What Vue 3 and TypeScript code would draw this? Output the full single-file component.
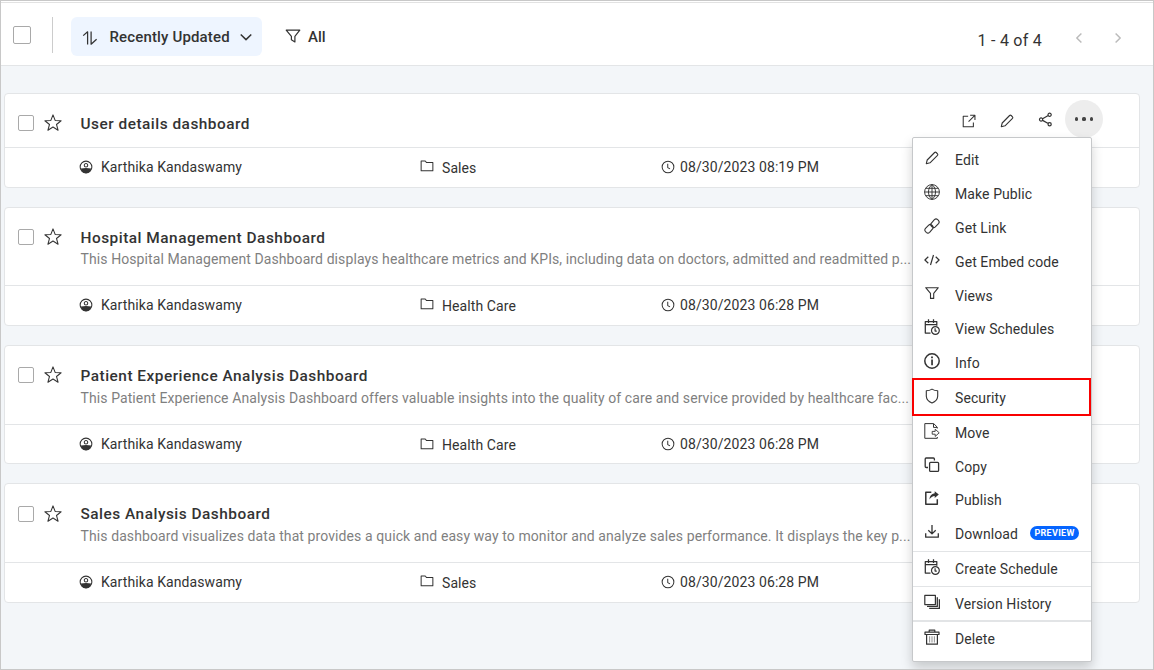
<script setup lang="ts">
interface Shape { d: string; fill?: boolean; w?: number; light?: boolean }
interface MenuItem { label: string; icon: string; h: number; marked?: boolean; badge?: string; rule?: number }
interface Card { title: string; text?: string; folder: string; date: string; size: string; menu?: boolean }

const icons: Record<string, Shape[]> = {
  edit: [{ d: 'M2.3 13.7 3.2 10 10.6 2.5Q11.4 1.8 12.2 2.5L13.5 3.8Q14.2 4.6 13.5 5.4L6 12.8Z' }],
  globe: [
    { d: 'M8 .6A7.4 7.4 0 1 0 8 15.4 7.4 7.4 0 1 0 8 .6M.6 8H15.4M8 .6V15.4M8 .6C3.3 4.5 3.3 11.5 8 15.4M8 .6C12.7 4.5 12.7 11.5 8 15.4M2 4.3H14M2 11.7H14', w: 0.95 },
  ],
  link: [
    { d: 'M7 5.6 10.4 1.7Q12 .2 13.7 1.7L14.4 2.4Q15.9 4 14.5 5.6L11.3 8.9Q9.7 10.3 8.1 8.9L7.4 8.2Q6.4 7 7 5.6M9 10.4 5.6 14.3Q4 15.8 2.3 14.3L1.6 13.6Q.1 12 1.5 10.4L4.7 7.1Q6.3 5.7 7.9 7.1L8.6 7.8Q9.6 9 9 10.4' },
  ],
  code: [{ d: 'M4.3 4.7.9 8 4.3 11.3M11.7 4.7 15.1 8 11.7 11.3M9.5 3 6.5 13', w: 1.2 }],
  funnel: [{ d: 'M1.2 2.2H14.8L9.9 8.4V14L6.4 11.8V8.4Z', w: 1.2 }],
  views: [{ d: 'M1.7 1.7H14.3L9.7 7.4V12.4H6.5V7.4Z' }],
  schedule: [
    { d: 'M6.5 14H1.3V2.5H12.8V6.8M1.3 5.5H12.8M4.5.3V4M9.5.3V4', w: 1.25 },
    { d: 'M11.4 7.6A3.9 3.9 0 1 0 11.4 15.4 3.9 3.9 0 1 0 11.4 7.6M11.1 9.2V12.1H12.8', w: 1.2 },
  ],
  info: [
    { d: 'M8 .8A7.2 7.2 0 1 0 8 15.2 7.2 7.2 0 1 0 8 .8', w: 1.5 },
    { d: 'M7.2 6.6H8.9V12.3H7.2ZM7.1 3.6H8.9V5.2H7.1Z', fill: true },
  ],
  shield: [{ d: 'M8 1.1C6 2.3 4.3 2.7 2.3 2.8V8.2C2.5 11.2 5 13.7 8 15 11 13.7 13.5 11.2 13.7 8.2V2.8C11.7 2.7 10 2.3 8 1.1Z' }],
  move: [
    { d: 'M13.3 5.5V4.2L9.7.6H.8V15.3H13.3V14M9.5.8V4.4H13', w: 1 },
    { d: 'M8.2 8.4H11.2V6.2L15.2 9.8 11.2 13.4V11.2H8.2Z', w: 0.9 },
  ],
  copy: [
    { d: 'M4 10.5H2.2Q1.2 10.5 1.2 9.5V2Q1.2 1 2.2 1H9.4Q10.4 1 10.4 2V3.6', w: 1.3 },
    { d: 'M6.6 5.3H13.6Q14.6 5.3 14.6 6.3V13.4Q14.6 14.4 13.6 14.4H6.6Q5.6 14.4 5.6 13.4V6.3Q5.6 5.3 6.6 5.3', w: 1.3 },
  ],
  publish: [
    { d: 'M7.3 2.3H1.8V14.2H13.3V9.2', w: 1.5 },
    { d: 'M10.7 1.2 14.8 4.6 10.7 8V6Q7.6 6 5.4 9.5 5.7 4 10.7 3.3Z', fill: true },
  ],
  download: [{ d: 'M1.7 9.2V13.2H14.3V9.2M8 1V9.8M4.3 6.3 8 9.9 11.7 6.3', w: 1.3 }],
  history: [
    { d: 'M.8 1.4H11.4V10.6H.8Z', w: 1.2 },
    { d: 'M13.3 3.2V12.4H3M15.4 5.3V14.4H5.2', w: 1.3 },
  ],
  trash: [
    { d: 'M1 3.2H15V5.5H1ZM5.2 3V1.2H10.8V3M2.6 5.6V15.2H13.4V5.6', w: 1.2 },
    { d: 'M5.6 7.2V13.4M8 7.2V13.4M10.4 7.2V13.4', light: true },
  ],
  star: [{ d: 'M8 .8 9.9 5.7 15.2 6 11.1 9.3 12.5 14.4 8 11.6 3.5 14.4 4.9 9.3.8 6 6.1 5.7Z', w: 0.95 }],
  open: [{ d: 'M7 2.6H1.4V14.6H13V9.6M9.3 1.4H14.8V6.8M14.4 1.8 7.5 8.7', w: 1.2 }],
  share: [{ d: 'M12.4 1.2A1.7 1.7 0 1 0 12.4 4.6 1.7 1.7 0 1 0 12.4 1.2M3.3 6.3A1.7 1.7 0 1 0 3.3 9.7 1.7 1.7 0 1 0 3.3 6.3M12.4 11.4A1.7 1.7 0 1 0 12.4 14.8 1.7 1.7 0 1 0 12.4 11.4M4.9 7.2 10.9 3.8M4.9 8.9 10.9 12.2', w: 1.3 }],
  user: [
    { d: 'M8 1.3A6.7 6.7 0 1 0 8 14.7 6.7 6.7 0 1 0 8 1.3M8 4A2 2 0 1 0 8 8 2 2 0 1 0 8 4', w: 1.2 },
    { d: 'M2 9.8Q8 8.6 14 9.8 13 15 8 15 3 15 2 9.8Z', fill: true },
  ],
  folder: [{ d: 'M1.3 2.3H6L7.5 4.1H14.7V13.4H1.3Z', w: 1.15 }],
  clock: [{ d: 'M8 1.3A6.7 6.7 0 1 0 8 14.7 6.7 6.7 0 1 0 8 1.3M7.7 4.3V8.7L10.3 10.2', w: 1.15 }],
  sort: [{ d: 'M1.2 5.6 5.6 1.8V14.5M9.1 1.5V14.2L14.6 9.2', w: 1.25 }],
  down: [{ d: 'M2 5.2 8 11 14 5.2', w: 1.7 }],
  prev: [{ d: 'M10.4 3.5 5.8 8 10.4 12.5', w: 1.5 }],
  next: [{ d: 'M5.6 3.5 10.2 8 5.6 12.5', w: 1.5 }],
}

const menu: MenuItem[] = [
  { label: 'Edit', icon: 'edit', h: 34 },
  { label: 'Make Public', icon: 'globe', h: 34 },
  { label: 'Get Link', icon: 'link', h: 34 },
  { label: 'Get Embed code', icon: 'code', h: 34 },
  { label: 'Views', icon: 'views', h: 33 },
  { label: 'View Schedules', icon: 'schedule', h: 34 },
  { label: 'Info', icon: 'info', h: 34 },
  { label: 'Security', icon: 'shield', h: 35, marked: true },
  { label: 'Move', icon: 'move', h: 35 },
  { label: 'Copy', icon: 'copy', h: 33 },
  { label: 'Publish', icon: 'publish', h: 34 },
  { label: 'Download', icon: 'download', h: 34, badge: 'PREVIEW' },
  { label: 'Create Schedule', icon: 'schedule', h: 35, rule: 1 },
  { label: 'Version History', icon: 'history', h: 34, rule: 1 },
  { label: 'Delete', icon: 'trash', h: 36, rule: 2 },
]

const cards: Card[] = [
  { title: 'User details dashboard', folder: 'Sales', date: '08/30/2023 08:19 PM', size: 'short', menu: true },
  { title: 'Hospital Management Dashboard', text: 'This Hospital Management Dashboard displays healthcare metrics and KPIs, including data on doctors, admitted and readmitted p...', folder: 'Health Care', date: '08/30/2023 06:28 PM', size: 'mid' },
  { title: 'Patient Experience Analysis Dashboard', text: 'This Patient Experience Analysis Dashboard offers valuable insights into the quality of care and service provided by healthcare fac...', folder: 'Health Care', date: '08/30/2023 06:28 PM', size: 'low' },
  { title: 'Sales Analysis Dashboard', text: 'This dashboard visualizes data that provides a quick and easy way to monitor and analyze sales performance. It displays the key p...', folder: 'Sales', date: '08/30/2023 06:28 PM', size: 'tall' },
]

const Icon = (p: { name: string }) =>
  h('svg', { viewBox: '0 0 16 16', class: 'icon' }, (icons[p.name] ?? []).map((s) =>
    h('path', {
      d: s.d,
      fill: s.fill ? 'currentColor' : 'none',
      stroke: s.fill ? 'none' : 'currentColor',
      'stroke-width': s.w ?? 1.1,
      'stroke-opacity': s.light ? 0.5 : 1,
      'stroke-linejoin': 'round',
    })))
Icon.props = ['name']
</script>

<script lang="ts">
import { h } from 'vue'
</script>

<template>
  <div class="page">
    <header class="bar">
      <span class="check big"></span>
      <span class="sep"></span>
      <button class="sort"><Icon name="sort" class="i-sort" /><span class="sort-label">Recently Updated</span><Icon name="down" class="i-down" /></button>
      <Icon name="funnel" class="i-funnel" /><span class="all">All</span>
      <span class="count">1 - 4 of 4</span>
      <Icon name="prev" class="i-page" /><Icon name="next" class="i-page second" />
    </header>
    <main class="list">
      <article v-for="c in cards" :key="c.title" class="card" :class="c.size">
        <div class="head">
          <span class="check"></span>
          <Icon name="star" class="i-star" />
          <div class="titles">
            <h2>{{ c.title }}</h2>
            <p v-if="c.text">{{ c.text }}</p>
          </div>
          <div v-if="c.menu" class="actions">
            <Icon name="open" class="i-open" />
            <Icon name="edit" class="i-pen" />
            <Icon name="share" class="i-share" />
            <span class="more"><i></i><i></i><i></i></span>
          </div>
        </div>
        <div class="meta">
          <span class="owner"><Icon name="user" class="i-user" />Karthika Kandaswamy</span>
          <span class="folder"><Icon name="folder" class="i-folder" /><span>{{ c.folder }}</span></span>
          <span class="date"><Icon name="clock" class="i-clock" />{{ c.date }}</span>
        </div>
      </article>
    </main>
    <nav class="menu">
      <div v-for="m in menu" :key="m.label" class="item" :class="{ marked: m.marked }" :style="{ height: m.h + 'px', borderTopWidth: (m.rule ?? 0) + 'px' }">
        <Icon :name="m.icon" class="i-menu" />
        <span class="label">{{ m.label }}</span>
        <span v-if="m.badge" class="badge">{{ m.badge }}</span>
      </div>
    </nav>
  </div>
</template>

<style scoped>
* { box-sizing: border-box; }
.page { position: relative; width: 1154px; height: 670px; overflow: hidden; border: 1px solid #c8c8c8; background: #f3f6f9; font-family: Roboto, sans-serif; font-size: 14px; letter-spacing: 0.09px; color: #333; }
.icon { flex: none; display: block; width: 16px; height: 16px; color: #333; }
.bar { display: flex; align-items: center; height: 65px; background: #fff; border-bottom: 1px solid #e3e5e7; box-shadow: inset 0 1px #fff, inset 0 2px #e2e2e2; padding: 4px 0 0 12px; }
.check { flex: none; width: 16px; height: 16px; border: 1px solid #a9a9a9; border-radius: 2px; background: #fff; }
.check.big { width: 18px; height: 18px; }
.sep { width: 1px; height: 36px; margin-left: 21px; background: #ccc; }
.sort { display: flex; align-items: center; width: 191px; height: 39px; margin: 3px 0 0 18px; padding: 0; border: 0; border-radius: 6px; background: #eef5ff; color: #333; font: 500 15px Roboto, sans-serif; letter-spacing: 0.15px; }
.i-sort { margin: 2px 0 0 11px; }
.sort-label { width: 121px; margin-left: 11.5px; text-align: left; white-space: nowrap; }
.i-down { width: 14px; height: 14px; margin: 1px 0 0 8.5px; }
.i-funnel { margin: 2px 0 0 23px; }
.all { margin: 3px 0 0 7px; font-size: 15px; font-weight: 500; letter-spacing: 0; }
.count { margin: 11px 0 0 auto; font-size: 16px; letter-spacing: 0.25px; }
.i-page { margin: 6px 0 0 29px; color: #bbb; }
.i-page.second { margin: 6px 27px 0 23px; }
.list { display: flex; flex-direction: column; gap: 19px; padding: 27px 0 0 3px; }
.card { width: 1136px; height: 119px; display: flex; flex-direction: column; background: #fff; border: 1px solid #e3e5e7; border-radius: 4px; }
.card.short { height: 95px; }
.card.tall { height: 120px; }
.head { display: flex; align-items: flex-start; height: 77px; padding: 21px 0 0 13px; }
.short .head { height: 53px; }
.low .head, .tall .head { height: 78px; }
.tall .check { margin-top: 1px; }
.i-star { width: 18px; height: 18px; margin: -1px 0 0 10px; }
.tall .i-star { margin-top: 0; }
.titles { width: 832px; margin: -1px 0 0 18px; padding-left: 0.5px; }
h2 { margin: 0; font-size: 15.4px; line-height: 20px; font-weight: 500; letter-spacing: 0.5px; white-space: nowrap; }
p { margin: 1px 0 0; font-size: 14px; line-height: 20px; color: #7f7f7f; letter-spacing: 0.094px; white-space: nowrap; }
.low p, .tall p { margin-top: 2px; }
.actions { display: flex; align-items: center; height: 38px; margin: -15px 0 0 34px; }
.i-open { width: 14px; height: 14px; margin: 4px 0 0 16px; }
.i-pen { margin: 4px 0 0 23px; }
.i-share { margin: 0 0 0 23px; width: 15px; height: 15px; }
.more { display: flex; align-items: center; justify-content: center; gap: 4px; width: 38px; height: 38px; margin-left: 12px; border-radius: 50%; background: #ededed; }
.more i { width: 3.2px; height: 3.2px; border-radius: 50%; background: #444; }
.meta { flex: 1; display: flex; align-items: center; padding: 0 0 2px 74px; border-top: 1px solid #e3e5e7; white-space: nowrap; }
.low .meta { padding-bottom: 0; }
.owner, .folder, .date { display: flex; align-items: center; }
.owner { width: 340px; }
.folder { width: 242px; }
.folder span { padding-top: 2px; }
.i-user { width: 14px; height: 14px; margin-right: 8px; }
.i-folder { width: 14px; height: 14px; margin: -1px 8px 0 1px; }
.i-clock { width: 14px; height: 14px; margin-right: 5px; }
.menu { position: absolute; left: 911px; top: 136px; width: 180px; height: 525px; padding: 5px 0; border: 1px solid #c6c8ca; border-radius: 2px; background: #fff; box-shadow: 0 6px 12px rgba(0, 0, 0, 0.18); }
.item { position: relative; display: flex; align-items: center; padding-left: 11px; border: 0 solid #e2e4e6; }
.i-menu { margin-bottom: 4px; }
.label { margin-left: 15px; white-space: nowrap; }
.marked::after { content: ''; position: absolute; inset: -2px 0 -1px -1px; border: 2px solid #f90000; }
.badge { width: 49px; height: 14px; margin: -3px 0 0 12px; border-radius: 7px; background: #0565ff; color: #fff; font-size: 9px; font-weight: 700; line-height: 14px; text-align: center; letter-spacing: 0.3px; }
</style>

<style>
body { overflow: hidden; }
</style>
